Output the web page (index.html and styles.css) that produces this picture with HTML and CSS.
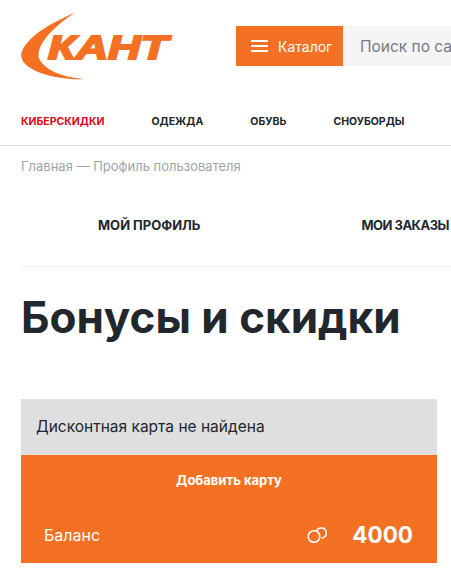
FILE: index.html
```html
<!DOCTYPE html>
<html lang="ru">
  <head>
    <meta charset="UTF-8" />
    <title>Бонусы и скидки</title>
    <link rel="stylesheet" href="styles.css">
  </head>
  <body>
    <header class="top">
      <svg class="logo" width="154" height="70" viewBox="0 0 154 70">
        <path class="logo-mark" d="M55 1 C26 14 8 25 1 40 C-2 48 3 55 17 61 C32 67 52 69 63 68 C40 66 22 58 18 47 C15 37 27 19 55 1 Z" />
        <text class="logo-text" x="27" y="47.5" textLength="120" lengthAdjust="spacingAndGlyphs">КАНТ</text>
      </svg>
      <button class="catalog">
        <span class="burger"><i></i><i></i><i></i></span>
        Каталог
      </button>
      <div class="search">Поиск по сайту</div>
    </header>

    <nav class="menu">
      <a class="sale">КИБЕРСКИДКИ</a>
      <a>ОДЕЖДА</a>
      <a>ОБУВЬ</a>
      <a>СНОУБОРДЫ</a>
    </nav>

    <div class="crumbs">Главная — Профиль пользователя</div>

    <div class="tabs">
      <a>МОЙ ПРОФИЛЬ</a>
      <a class="tab-orders">МОИ ЗАКАЗЫ</a>
    </div>

    <h1>Бонусы и скидки</h1>

    <section class="card">
      <div class="card-note">Дисконтная карта не найдена</div>
      <div class="card-body">
        <div class="card-add">Добавить карту</div>
        <div class="card-balance">
          <span class="balance-label">Баланс</span>
          <svg class="coins" width="20" height="16" viewBox="0 0 20 16">
            <circle cx="7" cy="9.5" r="5.8" />
            <path d="M9.5 4.5 A5 5 0 1 1 14.5 11" />
          </svg>
          <span class="balance-value">4000</span>
        </div>
      </div>
    </section>
  </body>
</html>
```

FILE: styles.css
```css
html,
body {
  margin: 0;
  height: 575px;
  overflow: hidden;
}

body {
  font-family: Inter, "Noto Sans", sans-serif;
  background-color: #fff;
  color: #21272c;
}

.top {
  display: flex;
  align-items: center;
  height: 92px;
  padding-left: 21px;
}

.logo {
  flex: none;
  margin-right: 61px;
}

.logo-mark {
  fill: #f47124;
}

.logo-text {
  font-family: "Liberation Sans", sans-serif;
  font-size: 34px;
  font-weight: 700;
  font-style: italic;
  fill: #f47124;
  stroke: #f47124;
  stroke-width: 2px;
}

.catalog {
  flex: none;
  display: flex;
  align-items: center;
  gap: 10px;
  width: 107px;
  height: 40px;
  padding: 0 0 0 15px;
  border: none;
  background-color: #f47124;
  color: #fff;
  font-family: inherit;
  font-size: 14px;
}

.burger {
  display: flex;
  flex-direction: column;
  gap: 3px;
}

.burger i {
  display: block;
  width: 17px;
  height: 2px;
  background-color: #fff;
}

.search {
  flex: 1;
  min-width: 0;
  height: 40px;
  padding-left: 17px;
  background-color: #f5f5f5;
  color: #747b8a;
  font-size: 15.5px;
  line-height: 42px;
  white-space: nowrap;
  overflow: hidden;
}

.menu {
  display: flex;
  align-items: center;
  box-sizing: border-box;
  height: 54px;
  padding: 5px 0 0 21px;
  border-bottom: 1px solid #dfdfdf;
  font-size: 10.5px;
  font-weight: 700;
}

.menu a {
  margin-right: 47px;
}

.menu .sale {
  color: #dc0a1e;
}

.crumbs {
  padding: 12px 0 0 21px;
  color: #a0a4a8;
  font-size: 13px;
  line-height: 17px;
}

.tabs {
  display: flex;
  align-items: center;
  box-sizing: border-box;
  height: 92px;
  margin-left: 21px;
  padding: 9px 0 0 77px;
  border-bottom: 1px solid #f3f3f3;
  font-size: 13px;
  font-weight: 700;
  white-space: nowrap;
}

.tabs a {
  flex: none;
  margin-right: 161px;
}

.tabs .tab-orders {
  margin-right: 0;
  letter-spacing: -0.5px;
}

h1 {
  margin: 22px 0 0 21px;
  font-size: 44px;
  font-weight: 700;
  line-height: 56px;
}

.card {
  width: 416px;
  margin: 54px 0 0 21px;
}

.card-note {
  height: 56px;
  padding-left: 15px;
  background-color: #dfdfdf;
  font-size: 15.5px;
  line-height: 56px;
}

.card-body {
  height: 108px;
  background-color: #f47124;
  color: #fff;
}

.card-add {
  padding-top: 17px;
  font-size: 13px;
  font-weight: 700;
  line-height: 17px;
  text-align: center;
}

.card-balance {
  display: flex;
  align-items: center;
  margin-top: 31px;
  padding: 0 24px 0 23px;
}

.balance-label {
  flex: 1;
  font-size: 16px;
}

.coins {
  fill: none;
  stroke: #fff;
  stroke-width: 1.5px;
  margin-right: 25px;
}

.balance-value {
  font-size: 22.5px;
  font-weight: 700;
  line-height: 30px;
}
```
